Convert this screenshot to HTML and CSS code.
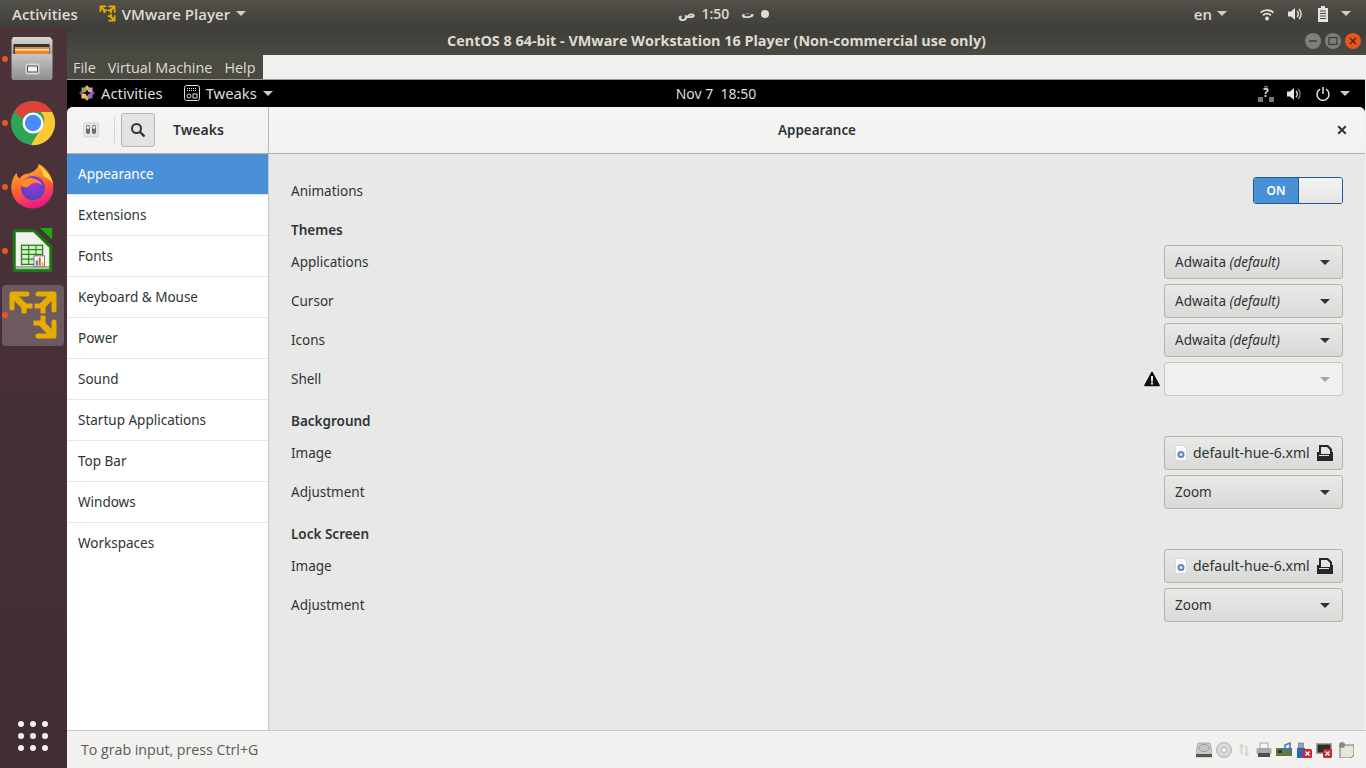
FILE: index.html
```html
<!doctype html>
<html lang="en">
<head>
<meta charset="utf-8">
<title>CentOS 8 64-bit - VMware Workstation 16 Player</title>
<meta name="viewport" content="width=device-width, initial-scale=1">
<link rel="stylesheet" href="styles.css">
</head>
<body>

<!-- host top bar -->
<header class="host-bar">
  <div class="host-left">
    <span class="host-activities">Activities</span>
    <span class="host-app">
      <svg class="vm-mini" viewBox="0 0 50 50"><use href="#vmware-logo"/></svg>
      VMware Player <i class="caret caret-host"></i>
    </span>
  </div>
  <div class="host-clock">
    <span class="ar">ص</span><span class="host-time">1:50</span><span class="ar ar-day">ت</span><i class="clock-dot"></i>
  </div>
  <div class="host-right">
    <span class="host-lang">en <i class="caret caret-host"></i></span>
    <svg class="tray" viewBox="0 0 16 16"><path d="M1 6a10 10 0 0 1 14 0l-1.200 1.300a8.300 8.300 0 0 0-11.600 0zM3.500 8.600a6.400 6.400 0 0 1 9 0l-1.200 1.300a4.700 4.700 0 0 0-6.600 0z" fill="#e6e4e0"/><circle cx="8" cy="12.500" r="2" fill="#e6e4e0"/></svg>
    <svg class="tray" viewBox="0 0 16 16"><path d="M1 5.500h3L8 2v12l-4-3.500H1z" fill="#e6e4e0"/><path d="M10 5a4 4 0 0 1 0 6M12 3a7 7 0 0 1 0 10" fill="none" stroke="#e6e4e0" stroke-width="1.400"/></svg>
    <svg class="tray" viewBox="0 0 16 16"><path d="M6 0h4v2h3v14H3V2h3z" fill="#e6e4e0"/><path d="M5 5h6M5 7.500h6M5 10h6M5 12.500h6" stroke="#4a4740" stroke-width="1"/></svg>
    <i class="caret caret-host"></i>
  </div>
</header>

<div class="desktop">

  <!-- dock -->
  <nav class="dock">
    <div class="dock-item">
      <i class="run-dot"></i>
      <svg class="dock-icon" viewBox="0 0 46 46">
        <defs>
          <linearGradient id="cab-top" x1="0" y1="0" x2="0" y2="1"><stop offset="0" stop-color="#d8d8d6"/><stop offset="1" stop-color="#a6a6a4"/></linearGradient>
          <linearGradient id="cab" x1="0" y1="0" x2="0" y2="1"><stop offset="0" stop-color="#c6c6c4"/><stop offset="1" stop-color="#8e8e8c"/></linearGradient>
        </defs>
        <path d="M3 1h37l2.500 3v14h-41V4z" fill="url(#cab-top)"/>
        <rect x="3.500" y="8" width="36" height="10" fill="#33332f"/>
        <rect x="5" y="11" width="34" height="7" fill="#e88a30"/>
        <rect x="5" y="13" width="34" height="1.600" fill="#fbe3bd"/>
        <path d="M1.500 18h41v24a2 2 0 0 1-2 2h-37a2 2 0 0 1-2-2z" fill="url(#cab)"/>
        <rect x="15.500" y="27.500" width="14" height="11" rx="2" fill="#d8d8d6"/>
        <rect x="17.500" y="30" width="10" height="6" fill="#f2f2f0" stroke="#55554f" stroke-width="1"/>
      </svg>
    </div>
    <div class="dock-item">
      <i class="run-dot"></i>
      <svg class="dock-icon" viewBox="0 0 48 48">
        <circle cx="24" cy="24" r="23" fill="#2fa455"/>
        <path d="M4.100 12.500A23 23 0 0 1 44 12.500H24a11.500 11.500 0 0 0-10.500 7z" fill="#dc4437"/>
        <path d="M44 12.500A23 23 0 0 1 22 47l11-18.500a11.500 11.500 0 0 0-1-16z" fill="#fcc934"/>
        <circle cx="24" cy="24" r="11" fill="#fff"/>
        <circle cx="24" cy="24" r="8.500" fill="#4a8af4"/>
      </svg>
    </div>
    <div class="dock-item">
      <i class="run-dot"></i>
      <svg class="dock-icon" viewBox="0 0 48 48">
        <defs>
          <linearGradient id="ffx" x1="0.200" y1="0" x2="0.500" y2="1"><stop offset="0" stop-color="#ffc02e"/><stop offset="0.500" stop-color="#ff6a2b"/><stop offset="1" stop-color="#e8158a"/></linearGradient>
          <radialGradient id="ffg" cx="0.500" cy="0.350" r="0.700"><stop offset="0" stop-color="#a23bd8"/><stop offset="1" stop-color="#4f3fc0"/></radialGradient>
        </defs>
        <path d="M30 0c8 4 14 12 15 21a22 22 0 1 1-43-2c1-4 3-8 5-10 0 3 1 5 3 6 2-3 6-5 10-5 4-2 9-4 10-10z" fill="url(#ffx)"/>
        <path d="M30 1c6 5 13 10 15 20-3-5-7-7-10-8 0-4-3-8-5-12z" fill="#ffd83a"/>
        <circle cx="24" cy="25" r="12.500" fill="url(#ffg)"/>
        <path d="M11 21c3-6 9-7 13-6 5 1 9 4 10 8-3-3-6-4-10-3-3 .5-3 3-6 4-3 1-5 0-7-3z" fill="#ff8a2e"/>
      </svg>
    </div>
    <div class="dock-item">
      <i class="run-dot"></i>
      <svg class="dock-icon" viewBox="0 0 46 48">
        <path d="M2 3.500a2 2 0 0 1 2-2h21L43 19v25a2 2 0 0 1-2 2H4a2 2 0 0 1-2-2z" fill="#177d0e"/>
        <path d="M5 4.500h18.500L40 20.500V40H5z" fill="#f1f1ee"/>
        <rect x="5" y="40" width="35" height="3" fill="#b6b6b4"/>
        <path d="M30 0h13v12z" fill="#1da80f"/>
        <rect x="11" y="18" width="22" height="20" fill="#d6f0cf" stroke="#278a1c" stroke-width="1.400"/>
        <path d="M11 22.500h22M11 27.500h22M11 32.500h22M18.500 18v20M26 18v20" stroke="#278a1c" stroke-width="1.200"/>
        <rect x="24" y="29" width="11" height="11" fill="#f4f4f2" stroke="#777" stroke-width="1"/>
        <rect x="26" y="34" width="2" height="5" fill="#2a7fd5"/><rect x="29" y="31" width="2" height="8" fill="#e8541e"/><rect x="32" y="36" width="2" height="3" fill="#f0b000"/>
      </svg>
    </div>
    <div class="dock-item dock-active">
      <i class="run-dot"></i>
      <svg class="dock-vm" viewBox="0 0 50 50"><use href="#vmware-logo"/></svg>
    </div>
    <div class="dock-grid">
      <i></i><i></i><i></i><i></i><i></i><i></i><i></i><i></i><i></i>
    </div>
  </nav>

  <div class="player">

    <!-- player title bar -->
    <div class="player-title">
      <span>CentOS 8 64-bit - VMware Workstation 16 Player (Non-commercial use only)</span>
      <div class="win-buttons">
        <i class="win-btn"><svg viewBox="0 0 16 16"><path d="M4 8h8" stroke="#3a3a36" stroke-width="1.400"/></svg></i>
        <i class="win-btn"><svg viewBox="0 0 16 16"><rect x="4" y="4.500" width="8" height="7" fill="none" stroke="#3a3a36" stroke-width="1.200"/></svg></i>
        <i class="win-btn win-close"><svg viewBox="0 0 16 16"><path d="M5 5l6 6M11 5l-6 6" stroke="#3a2a20" stroke-width="1.400"/></svg></i>
      </div>
    </div>

    <div class="player-menu">
      <div class="menu-items"><span>File</span><span>Virtual Machine</span><span>Help</span></div>
    </div>

    <!-- guest screen -->
    <div class="guest">
      <div class="guest-bar">
        <div class="guest-left">
          <svg class="centos" viewBox="0 0 16 16">
            <path d="M8 0l2.500 3L8 6 5.500 3z" fill="#d8c83c"/>
            <path d="M16 8l-3 2.500L10 8l3-2.500z" fill="#a8509c"/>
            <path d="M8 16l-2.500-3L8 10l2.500 3z" fill="#e2a83c"/>
            <path d="M0 8l3-2.500L6 8l-3 2.500z" fill="#8a4fa8"/>
            <path d="M2.500 2.500h4.500V7H2.500z" fill="#9aa850"/><path d="M9 2.500h4.500V7H9z" fill="#dc9ab8"/>
            <path d="M9 9h4.500v4.500H9z" fill="#7a78c0"/><path d="M2.500 9H7v4.500H2.500z" fill="#e0c860"/>
          </svg>
          <span class="guest-activities">Activities</span>
          <span class="guest-app">
            <svg class="tweak-mini" viewBox="0 0 16 16"><rect x=".5" y=".5" width="15" height="15" rx="2" fill="none" stroke="#ddd"/><path d="M3 3.500h10M3 5.500h10" stroke="#ddd" stroke-dasharray="1 1"/><circle cx="5" cy="11" r="2" fill="none" stroke="#ddd"/><rect x="9" y="9" width="4" height="4" fill="none" stroke="#ddd"/></svg>
            Tweaks <i class="caret caret-guest"></i>
          </span>
        </div>
        <div class="guest-clock">Nov 7&nbsp; 18:50</div>
        <div class="guest-right">
          <span class="net-wrap">
            <svg class="tray-g" viewBox="0 0 16 16"><rect x="0" y="11" width="5" height="5" fill="#777"/><rect x="11" y="11" width="5" height="5" fill="#777"/><rect x="6" y="0" width="4" height="1.500" fill="#777"/></svg>
            <b class="net-q">?</b>
          </span>
          <svg class="tray-g" viewBox="0 0 16 16"><path d="M1 5.500h3L8 2v12l-4-3.500H1z" fill="#e6e6e6"/><path d="M10 5a4 4 0 0 1 0 6" fill="none" stroke="#e6e6e6" stroke-width="1.300"/><path d="M12 3a7 7 0 0 1 0 10" fill="none" stroke="#888" stroke-width="1.300"/></svg>
          <svg class="tray-g" viewBox="0 0 16 16"><path d="M8 1v7" stroke="#e6e6e6" stroke-width="1.500"/><path d="M5 3.200a6 6 0 1 0 6 0" fill="none" stroke="#e6e6e6" stroke-width="1.500"/></svg>
          <i class="caret caret-guest"></i>
        </div>
      </div>

      <div class="tweaks">
        <div class="tw-head">
          <div class="tw-head-left">
            <svg class="tw-app-icon" viewBox="0 0 16 16"><rect x="0" y="1" width="16" height="14" rx="2" fill="#e4e4e2" stroke="#c4c4c2" stroke-width=".6"/><rect x="3" y="3" width="4" height="9" rx="2" fill="#6a6a68"/><rect x="9" y="3" width="4" height="9" rx="2" fill="#6a6a68"/><circle cx="5" cy="5.500" r="1.400" fill="#eee"/><circle cx="11" cy="5.500" r="1.400" fill="#eee"/></svg>
            <i class="tw-sep"></i>
            <span class="tw-search">
              <svg viewBox="0 0 16 16"><circle cx="6.500" cy="6.500" r="4.500" fill="none" stroke="#2e3436" stroke-width="2"/><path d="M10 10l4.500 4.500" stroke="#2e3436" stroke-width="2.400"/></svg>
            </span>
            <span class="tw-app-name">Tweaks</span>
          </div>
          <div class="tw-head-main">
            <span class="tw-title">Appearance</span>
            <svg class="tw-close" viewBox="0 0 10 10"><path d="M1.200 1.200l7.600 7.600M8.800 1.200L1.200 8.800" stroke="#2e3436" stroke-width="2"/></svg>
          </div>
        </div>

        <div class="tw-body">
          <ul class="tw-side">
            <li class="selected">Appearance</li>
            <li>Extensions</li>
            <li>Fonts</li>
            <li>Keyboard &amp; Mouse</li>
            <li>Power</li>
            <li>Sound</li>
            <li>Startup Applications</li>
            <li>Top Bar</li>
            <li>Windows</li>
            <li>Workspaces</li>
          </ul>

          <section class="tw-main">
            <div class="row row-switch">
              <span>Animations</span>
              <div class="switch"><span class="switch-on">ON</span><span class="switch-knob"></span></div>
            </div>

            <h3>Themes</h3>
            <div class="row"><span>Applications</span><div class="combo"><span>Adwaita <em>(default)</em></span><i class="caret caret-dark"></i></div></div>
            <div class="row"><span>Cursor</span><div class="combo"><span>Adwaita <em>(default)</em></span><i class="caret caret-dark"></i></div></div>
            <div class="row"><span>Icons</span><div class="combo"><span>Adwaita <em>(default)</em></span><i class="caret caret-dark"></i></div></div>
            <div class="row">
              <span>Shell</span>
              <div class="combo-wrap">
                <svg class="warn" viewBox="0 0 16 16"><path d="M8 1.500L15 14.500H1z" fill="#111" stroke="#111" stroke-width="1.600" stroke-linejoin="round"/><path d="M7 5h2v5.500H7zM7 11.500h2v2H7z" fill="#e8e8e7"/></svg>
                <div class="combo combo-off"><span></span><i class="caret caret-off"></i></div>
              </div>
            </div>

            <h3>Background</h3>
            <div class="row">
              <span>Image</span>
              <div class="combo combo-file">
                <svg class="file-ic" viewBox="0 0 12 16"><path d="M.5.500h8l3 3v12H.5z" fill="#fafafa" stroke="#ccc" stroke-width=".6"/><circle cx="6" cy="9.500" r="3.500" fill="#5b86c4"/><circle cx="6" cy="9.500" r="1.500" fill="#dfe8f4"/></svg>
                <span class="file-name">default-hue-6.xml</span>
                <svg class="open-ic" viewBox="0 0 16 16"><path d="M0 16V7h2V0h9l4 4v3h1v9z" fill="#23292b"/><path d="M4 2h6l3 3v4H4z" fill="#e4e4e3"/><path d="M2 10.500h10" stroke="#e4e4e3" stroke-width="1"/></svg>
              </div>
            </div>
            <div class="row"><span>Adjustment</span><div class="combo"><span>Zoom</span><i class="caret caret-dark"></i></div></div>

            <h3>Lock Screen</h3>
            <div class="row">
              <span>Image</span>
              <div class="combo combo-file">
                <svg class="file-ic" viewBox="0 0 12 16"><path d="M.5.500h8l3 3v12H.5z" fill="#fafafa" stroke="#ccc" stroke-width=".6"/><circle cx="6" cy="9.500" r="3.500" fill="#5b86c4"/><circle cx="6" cy="9.500" r="1.500" fill="#dfe8f4"/></svg>
                <span class="file-name">default-hue-6.xml</span>
                <svg class="open-ic" viewBox="0 0 16 16"><path d="M0 16V7h2V0h9l4 4v3h1v9z" fill="#23292b"/><path d="M4 2h6l3 3v4H4z" fill="#e4e4e3"/><path d="M2 10.500h10" stroke="#e4e4e3" stroke-width="1"/></svg>
              </div>
            </div>
            <div class="row"><span>Adjustment</span><div class="combo"><span>Zoom</span><i class="caret caret-dark"></i></div></div>
          </section>
        </div>
      </div>
    </div>

    <!-- player status bar -->
    <footer class="player-status">
      <span class="status-text">To grab input, press Ctrl+G</span>
      <div class="status-icons">
        <svg viewBox="0 0 16 16"><path d="M2 1h12l2 9v5H0v-5z" fill="#c9c9c7" stroke="#8a8a88" stroke-width=".6"/><ellipse cx="8" cy="6" rx="5" ry="3.500" fill="none" stroke="#9a9a98"/><rect x="0" y="12" width="16" height="3" fill="#55554f"/></svg>
        <svg viewBox="0 0 16 16"><circle cx="8" cy="8" r="7.500" fill="#d9d9d7" stroke="#9b9b99" stroke-width=".7"/><circle cx="8" cy="8" r="2.500" fill="#f6f6f4" stroke="#9b9b99" stroke-width=".7"/></svg>
        <svg class="net-ic" viewBox="0 0 12 16"><path d="M3.500 1L6.500 5H4.500v7h-2V5H.5zM8.500 15l-3-4h2V4h2v7h2z" fill="#d4d4d0"/></svg>
        <svg viewBox="0 0 16 16"><rect x="4" y="1" width="8" height="6" fill="#f4f4f2" stroke="#8a8a88" stroke-width=".7"/><rect x="0.500" y="6" width="15" height="6" rx="1.500" fill="#a9a9a7"/><rect x="2" y="11" width="12" height="4" fill="#4e4e4c"/></svg>
        <svg viewBox="0 0 16 16"><rect x="0" y="6" width="16" height="8" fill="#5c7a3a"/><rect x="2" y="8" width="4" height="3" fill="#2f3e20"/><path d="M9 8V3l5-2v6" fill="none" stroke="#3f78c8" stroke-width="1.500"/><circle cx="8" cy="8" r="1.600" fill="#3f78c8"/><circle cx="13" cy="7" r="1.600" fill="#3f78c8"/></svg>
        <svg viewBox="0 0 16 16"><rect x="1" y="6" width="8" height="10" fill="#2e66b4"/><rect x="2.500" y="1" width="5" height="5" fill="#9aa4ae" stroke="#556" stroke-width=".5"/><rect x="7" y="7" width="9" height="9" rx="1.500" fill="#d8212f"/><path d="M9.500 9.500l4 4M13.500 9.500l-4 4" stroke="#fff" stroke-width="1.400"/></svg>
        <svg viewBox="0 0 16 16"><rect x="0" y="1" width="16" height="11" fill="#a4a4a2"/><rect x="1.500" y="2.500" width="13" height="8" fill="#2c2c2c"/><rect x="7" y="7" width="9" height="9" rx="1.500" fill="#d8212f"/><path d="M9.500 9.500l4 4M13.500 9.500l-4 4" stroke="#fff" stroke-width="1.400"/></svg>
        <svg class="note-ic" viewBox="0 0 16 16"><path d="M2 3h14v10l-3 3H2z" fill="#e8e6d8" stroke="#555" stroke-width=".8"/><circle cx="4" cy="3" r="3" fill="#8a8a88"/></svg>
      </div>
    </footer>
  </div>
</div>

<svg class="svg-defs" width="0" height="0">
  <symbol id="vmware-logo" viewBox="8 10 50 50">
    <g fill="none" stroke="#e8ac00" stroke-width="5" stroke-linecap="round" stroke-linejoin="round">
      <path d="M27 14H12V28"/>
      <path d="M38 14H54V30"/>
      <path d="M54 42V56H38"/>
      <path d="M24 31V26H30" stroke-linecap="square"/>
      <path d="M37 26H43V31" stroke-linecap="square"/>
      <path d="M36 43H43V38" stroke-linecap="square"/>
    </g>
    <g fill="none" stroke="#e8ac00" stroke-width="6.500" stroke-linecap="butt">
      <path d="M14 16L26 28"/>
      <path d="M52 16L41 27"/>
      <path d="M52 54L41 43"/>
    </g>
  </symbol>
</svg>

</body>
</html>
```

FILE: styles.css
```css
*{box-sizing:border-box;margin:0;padding:0;}
html,body{height:100%;overflow:hidden;}
body{width:1366px;height:768px;display:flex;flex-direction:column;font-family:"Noto Sans","Liberation Sans",sans-serif;font-size:13.5px;color:#2e3436;background:#3c3b37;}
.svg-defs{position:absolute;}

.caret{display:inline-block;width:0;height:0;border-left:5px solid transparent;border-right:5px solid transparent;}
.caret-host{border-top:5px solid #d0cec8;}
.caret-guest{border-top:5px solid #ccc;}
.caret-dark{border-top:5px solid #2e3436;}
.caret-off{border-top:5px solid #a0a4a4;}

/* host bar */
.host-bar{height:27px;flex:none;display:flex;align-items:center;justify-content:space-between;position:relative;background:linear-gradient(#54514a,#3f3e39);color:#dfdbd2;font-family:"Open Sans","Noto Sans",sans-serif;font-size:15px;font-weight:600;padding-left:12px;}
.host-left{display:flex;align-items:center;gap:21px;}
.host-app{display:flex;align-items:center;gap:6px;}
.vm-mini{width:17px;height:17px;}
.host-clock{position:absolute;left:678px;top:0;height:27px;display:flex;align-items:center;}
.ar{font-family:"DejaVu Sans",sans-serif;font-size:13px;}
.host-time{margin:0 0 0 6px;font-size:14px;}
.ar-day{margin:0 7px 0 12px;}
.clock-dot{width:8px;height:8px;border-radius:50%;background:#dedcd8;}
.host-right{display:flex;align-items:center;gap:12px;padding-right:15px;}
.host-right > .caret{margin-left:-2px;}
.host-lang{display:flex;align-items:center;gap:5px;margin-right:20px;}
.tray{width:16px;height:16px;}

.desktop{flex:1;display:flex;min-height:0;}

/* dock */
.dock{width:67px;flex:none;display:flex;flex-direction:column;background:linear-gradient(#4c3339,#3f2d33);}
.dock-item{height:64px;position:relative;display:flex;align-items:center;justify-content:center;padding-right:1px;}
.dock-icon{width:46px;height:46px;}
.dock-active::before{content:"";position:absolute;left:2px;right:3px;top:2px;bottom:1px;background:rgba(255,255,255,.2);border-radius:4px;}
.dock-vm{width:50px;height:50px;position:relative;}
.run-dot{position:absolute;left:2px;top:29px;width:6px;height:6px;border-radius:50%;background:#e95420;z-index:1;}
.dock-grid{margin-top:auto;height:64px;display:grid;grid-template-columns:repeat(3,6px);grid-template-rows:repeat(3,6px);gap:6px;place-content:center;padding-right:1px;}
.dock-grid i{background:#f2f0ee;border-radius:50%;}

/* player window */
.player{flex:1;min-width:0;display:flex;flex-direction:column;background:#f2f1ef;}
.player-title{height:28px;flex:none;display:flex;align-items:center;justify-content:center;position:relative;padding-bottom:2px;background:linear-gradient(#3d3c37,#4a4942);color:#dfdbd2;font-family:"Open Sans","Noto Sans",sans-serif;font-weight:700;font-size:14.4px;}
.win-buttons{position:absolute;right:5px;top:6px;display:flex;gap:4px;}
.win-btn{width:16px;height:16px;border-radius:50%;background:#7f7e78;display:block;}
.win-btn svg{display:block;width:16px;height:16px;}
.win-close{background:#e95420;}
.player-menu{height:24px;flex:none;display:flex;}
.menu-items{width:196px;display:flex;align-items:center;gap:12px;padding:0 0 0 6px;background:#4a4942;color:#dfdbd2;font-family:"Open Sans","Noto Sans",sans-serif;font-size:14.4px;}
.guest{flex:1;min-height:0;display:flex;flex-direction:column;margin-right:1px;background:#000;border-top:1px solid #9a9a96;}
.guest-bar{height:27px;flex:none;display:flex;align-items:center;justify-content:space-between;position:relative;background:#000;color:#ddd;font-size:14px;}
.guest-left{display:flex;align-items:center;padding:0 0 1px 12px;font-size:14.8px;}
.centos{width:16px;height:16px;margin-right:6px;}
.guest-activities{margin-right:21px;}
.guest-app{display:flex;align-items:center;gap:6px;}
.tweak-mini{width:16px;height:16px;}
.guest-clock{position:absolute;left:0;right:0;top:0;height:27px;line-height:27px;text-align:center;}
.guest-right{display:flex;align-items:center;gap:12px;padding-right:15px;}
.guest-right > svg:nth-of-type(2){margin-left:1px;margin-right:-3px;}
.net-wrap{position:relative;width:16px;height:16px;}
.net-q{position:absolute;left:5px;top:-2px;font-size:12px;color:#ddd;}
.tray-g{width:16px;height:16px;display:block;}

/* tweaks window */
.tweaks{flex:1;min-height:0;display:flex;flex-direction:column;background:#e8e8e7;border-radius:6px 6px 0 0;overflow:hidden;}
.tw-head{height:47px;flex:none;display:flex;background:linear-gradient(#f5f5f5,#f1f1f0);border-bottom:1px solid #b0b0ac;}
.tw-head-left{width:202px;flex:none;display:flex;align-items:center;border-right:1px solid #b8b8b4;padding-left:16px;}
.tw-app-icon{width:16px;height:16px;}
.tw-sep{width:1px;height:26px;background:#d4d4d2;margin:0 6px 0 15px;}
.tw-search{width:34px;height:34px;border:1px solid #b6b6b2;border-radius:3px;background:#e3e3e1;display:flex;align-items:center;justify-content:center;}
.tw-search svg{width:16px;height:16px;}
.tw-app-name{font-weight:600;font-size:14px;margin:0 0 2px 18px;color:#2e3436;}
.tw-head-main{flex:1;display:flex;align-items:center;justify-content:center;position:relative;}
.tw-title{font-weight:600;font-size:13.4px;color:#2e3436;}
.tw-close{position:absolute;right:18px;top:18px;width:10px;height:10px;}
.tw-body{flex:1;min-height:0;display:flex;}
.tw-side{width:202px;flex:none;list-style:none;background:#fff;border-right:1px solid #c4c4c0;}
.tw-side li{height:41px;line-height:40px;padding-left:11px;border-bottom:1px solid #e6e6e5;color:#2e3436;}
.tw-side li:last-child{border-bottom:0;}
.tw-side li.selected{background:#4a90d9;color:#fff;}
.tw-main{flex:1;min-width:0;padding:23px 22px 0;}
.tw-main h3{font-size:13.5px;font-weight:600;height:40px;line-height:20px;padding-top:15px;color:#2e3436;}
.row{height:34px;display:flex;align-items:center;justify-content:space-between;margin-bottom:5px;}
.row-switch{height:27px;margin-bottom:6px;}
.row + h3{margin-top:-5px;}
.switch{width:90px;height:27px;display:flex;border:1px solid #1f5a9a;border-radius:3px;overflow:hidden;}
.switch-on{width:44px;background:#4a90d9;color:#fff;font-size:12px;font-weight:600;text-align:center;line-height:25px;}
.switch-knob{flex:1;background:linear-gradient(#f4f4f3,#e4e4e2);border-left:1px solid #1f5a9a;}
.combo{width:179px;height:34px;flex:none;display:flex;align-items:center;justify-content:space-between;padding:0 12px 0 10px;border:1px solid #b4b4ae;border-radius:3px;background:linear-gradient(#e9e9e8,#d9d9d7);color:#2e3436;}
.combo em{font-style:italic;}
.combo-wrap{display:flex;align-items:center;gap:4px;}
.warn{width:16px;height:16px;}
.combo-off{background:#f0f0ef;border-color:#c6c6c2;}
.combo-file{justify-content:flex-start;}
.file-ic{width:12px;height:16px;flex:none;margin-right:6px;}
.file-name{flex:1;min-width:0;white-space:nowrap;font-size:14px;padding-bottom:1px;}
.open-ic{width:16px;height:16px;flex:none;margin-right:-3px;}

/* status bar */
.player-status{height:38px;flex:none;display:flex;align-items:center;justify-content:space-between;background:#f2f1ef;border-top:1px solid #cdc9c5;padding:0 12px 0 14px;}
.status-text{color:#5a5a56;font-family:"Open Sans","Noto Sans",sans-serif;font-size:14.2px;}
.status-icons{display:flex;align-items:center;gap:4px;}
.status-icons svg{width:16px;height:16px;}
.status-icons .net-ic{width:12px;margin:0 2px;}
.status-icons .note-ic{margin-left:2px;}
```
